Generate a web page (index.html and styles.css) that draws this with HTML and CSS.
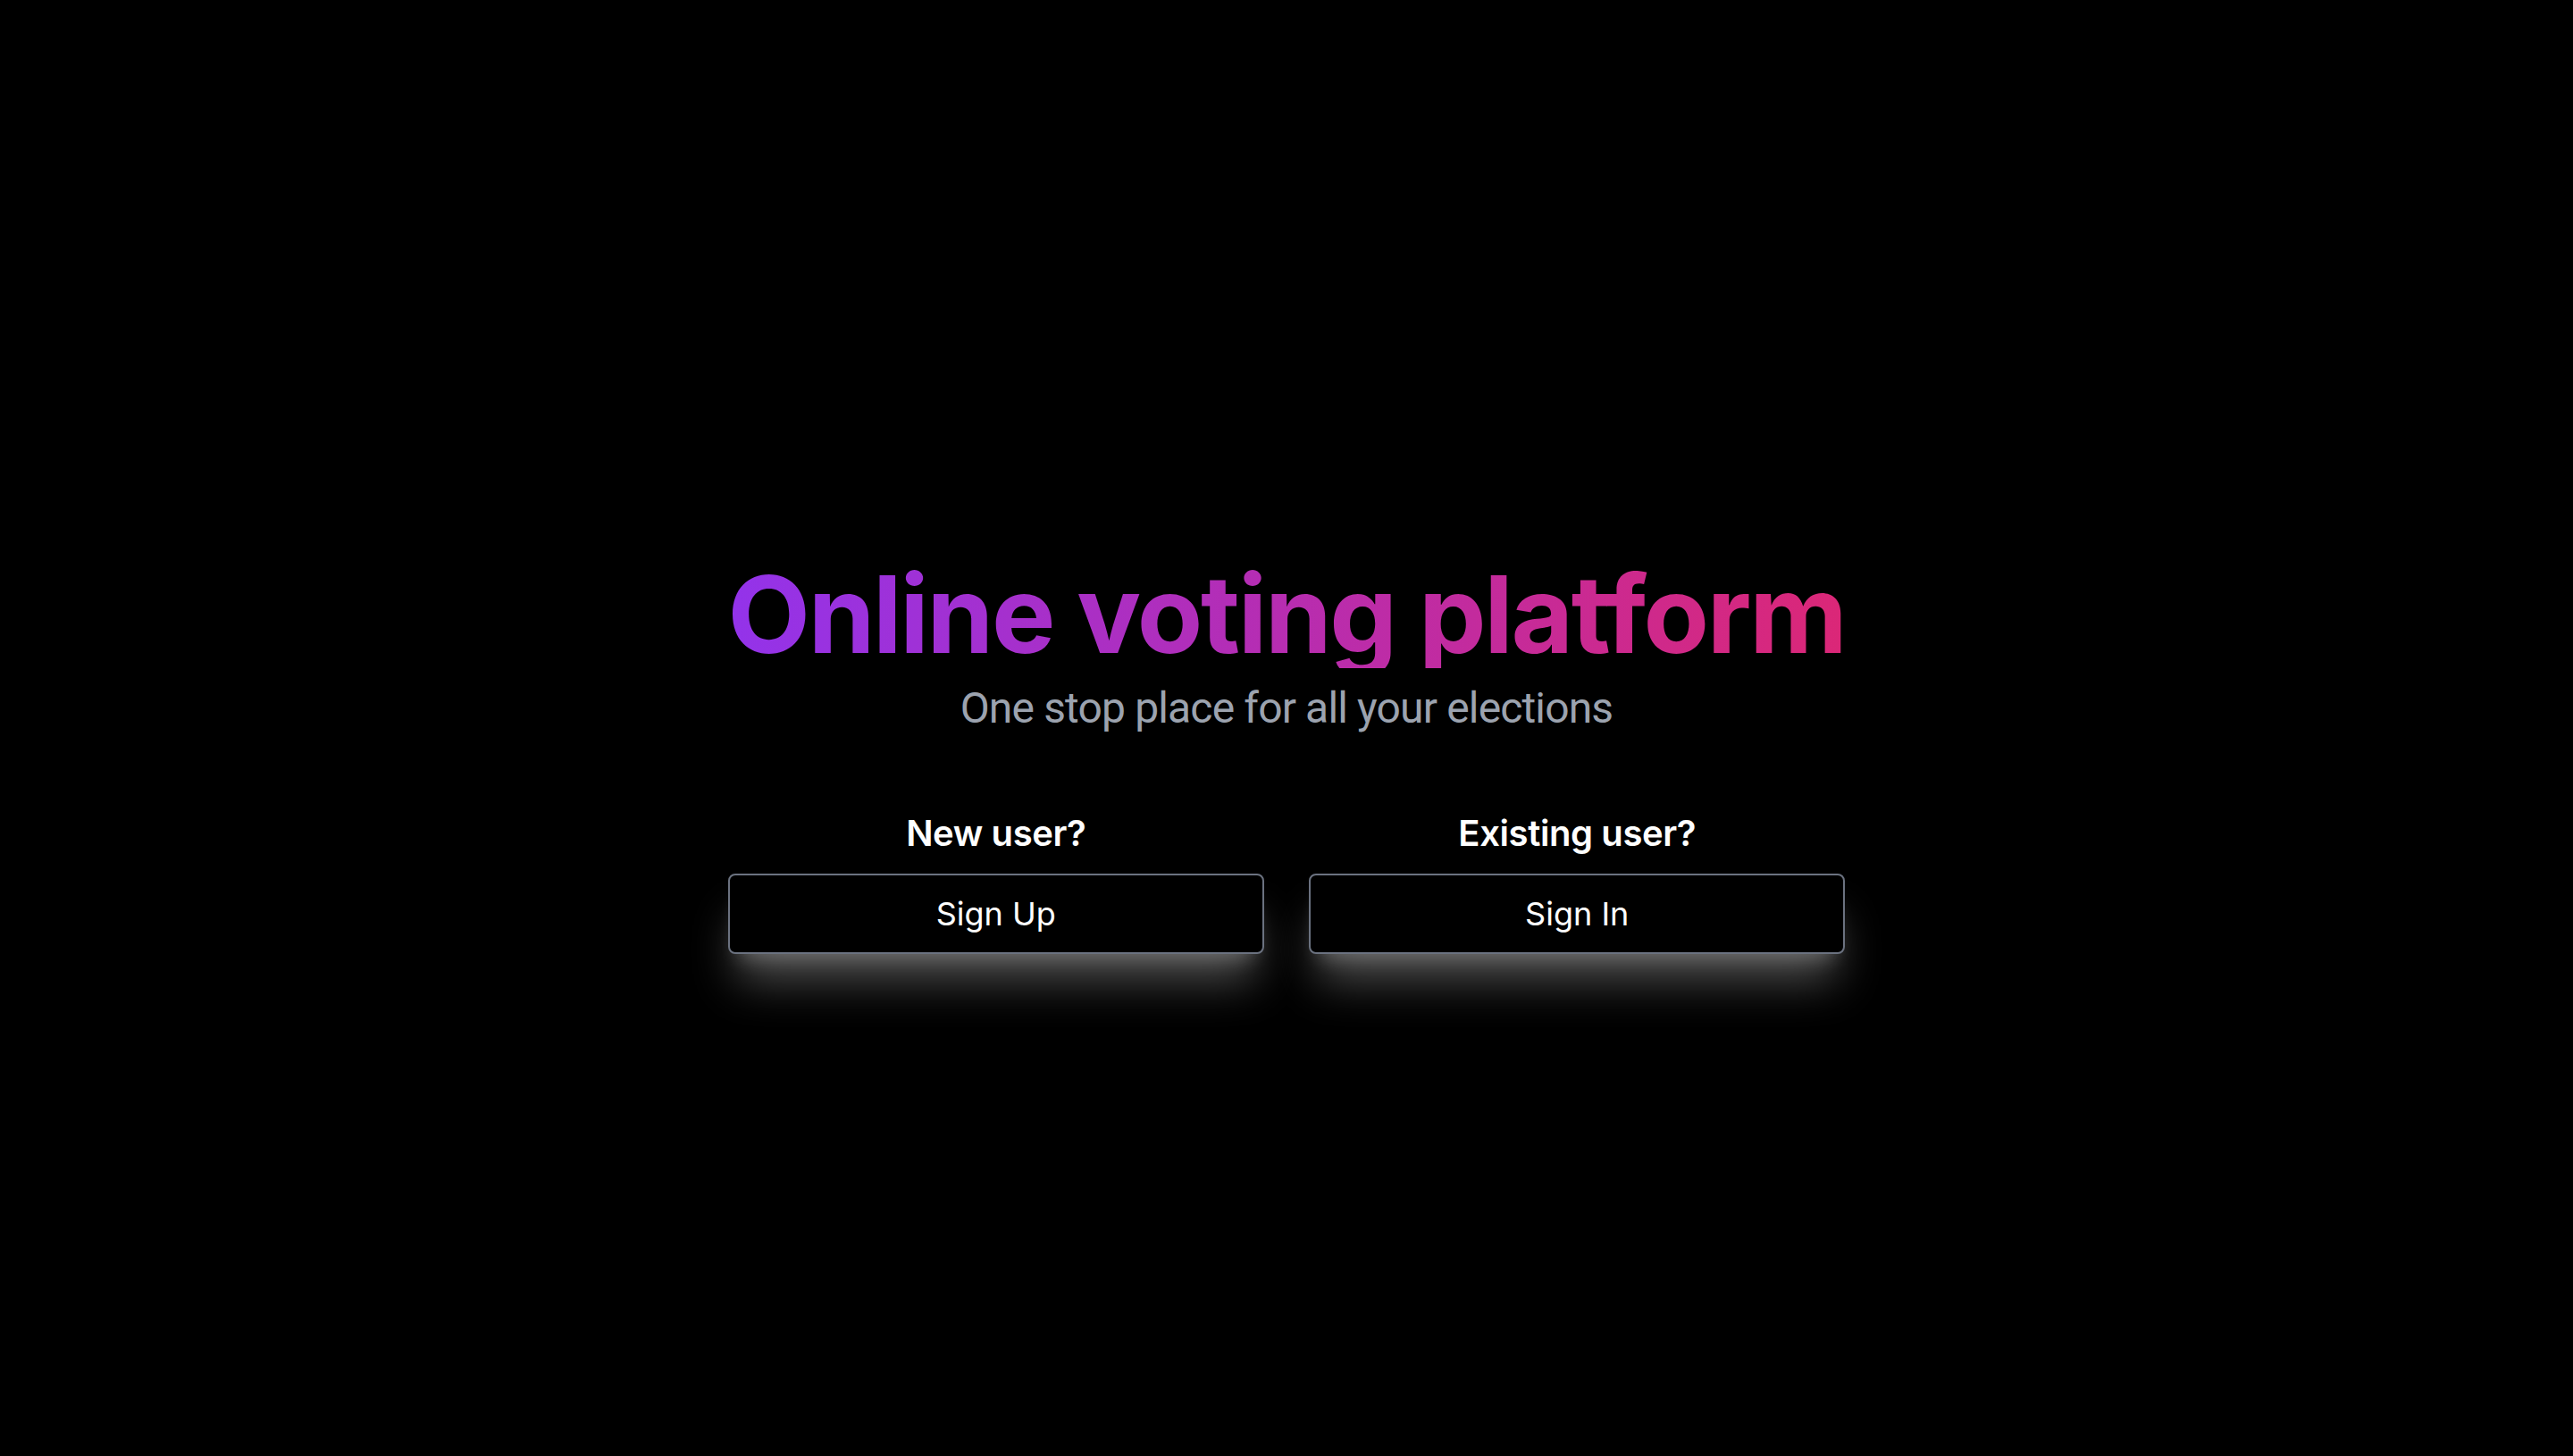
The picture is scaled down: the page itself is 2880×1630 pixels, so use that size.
FILE: index.html
```html
<!DOCTYPE html>
<html lang="en">
<head>
<meta charset="utf-8">
<title>Online voting platform</title>
<link rel="stylesheet" href="styles.css">
</head>
<body>
<main class="page">
  <div class="hero">
    <h1 class="title">Online voting platform</h1>
    <p class="subtitle">One stop place for all your elections</p>
    <div class="actions">
      <div class="action">
        <h2 class="action-label">New user?</h2>
        <button class="btn" type="button">Sign Up</button>
      </div>
      <div class="action">
        <h2 class="action-label">Existing user?</h2>
        <button class="btn" type="button">Sign In</button>
      </div>
    </div>
  </div>
</main>
</body>
</html>
```
FILE: styles.css
```css
html, body {
  margin: 0;
  padding: 0;
  background: #000;
  height: 100%;
}
body {
  font-family: Inter, "Noto Sans", "Liberation Sans", sans-serif;
  color: #fff;
}
.page {
  display: flex;
  justify-content: center;
  padding-top: 628px;
}
.hero {
  display: flex;
  flex-direction: column;
  align-items: stretch;
  text-align: center;
}
.title {
  margin: 0;
  font-size: 120px;
  line-height: 120px;
  font-weight: 700;
  letter-spacing: -2.3px;
  background: linear-gradient(90deg, #9333ea, #db2777);
  -webkit-background-clip: text;
  background-clip: text;
  color: transparent;
  white-space: nowrap;
}
.subtitle {
  margin: 13px 0 0;
  font-family: Roboto, Inter, sans-serif;
  font-size: 48px;
  line-height: 64px;
  font-weight: 400;
  letter-spacing: -0.85px;
  color: #9ca3af;
}
.actions {
  margin-top: 80px;
  display: grid;
  grid-template-columns: 1fr 1fr;
  column-gap: 50px;
}
.action {
  display: flex;
  flex-direction: column;
}
.action-label {
  margin: 0 0 17px;
  font-size: 40px;
  line-height: 56px;
  font-weight: 600;
  letter-spacing: -0.4px;
  color: #fff;
}
.btn {
  font-family: inherit;
  font-size: 36px;
  line-height: 56px;
  font-weight: 400;
  color: #fff;
  background: #000;
  border: 2px solid #6b7280;
  border-radius: 8px;
  padding: 15px 0;
  box-shadow: 0 40px 50px -10px rgba(255, 255, 255, 0.3), 0 16px 20px -12px rgba(255, 255, 255, 0.25);
  cursor: pointer;
}
```
